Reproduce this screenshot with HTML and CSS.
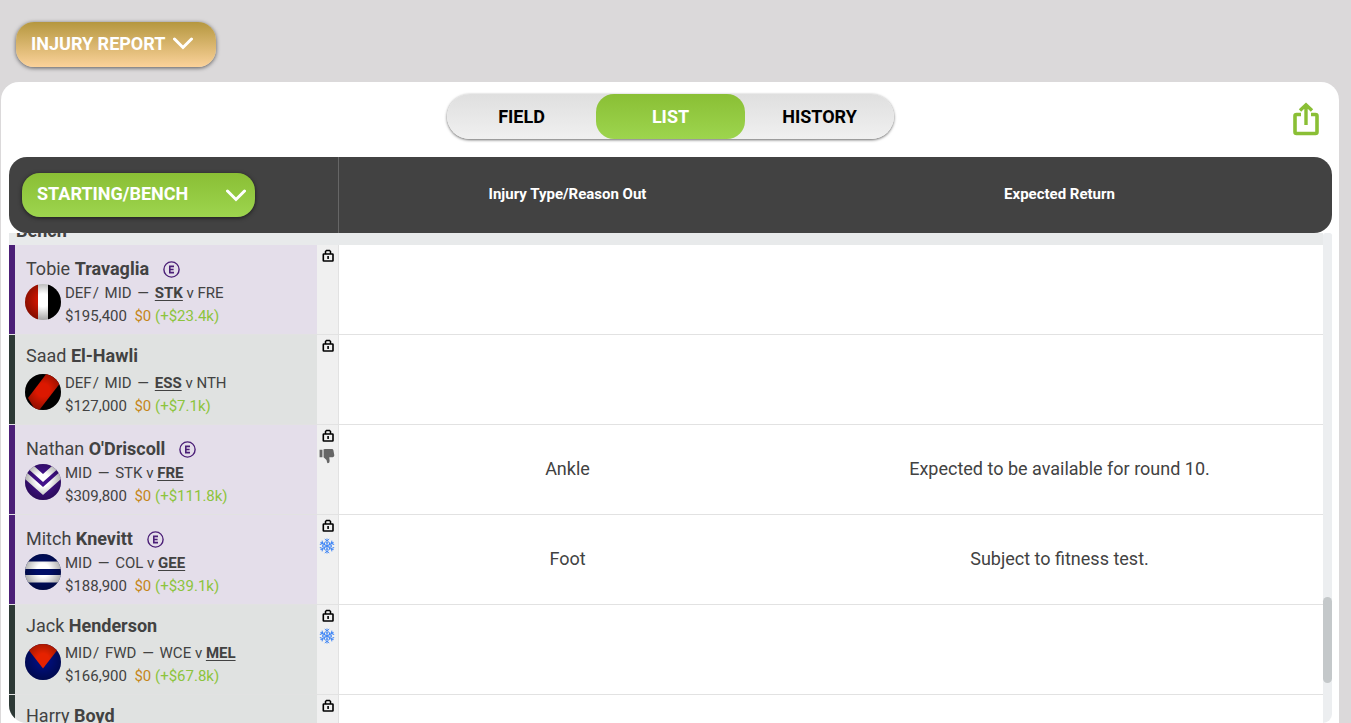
FILE: index.html
```html
<!DOCTYPE html>
<html lang="en">
<head>
<meta charset="utf-8">
<meta name="viewport" content="width=device-width, initial-scale=1">
<title>Injury Report</title>
<link rel="stylesheet" href="styles.css">
</head>
<body>
<svg class="defs" width="0" height="0" aria-hidden="true">
  <defs>
    <radialGradient id="shade" cx="50%" cy="45%" r="60%">
      <stop offset="0.3" stop-color="#000" stop-opacity="0"/>
      <stop offset="1" stop-color="#000" stop-opacity="0.4"/>
    </radialGradient>
    <clipPath id="ball"><circle cx="18" cy="18" r="18"/></clipPath>
    <symbol id="lock" viewBox="0 0 12 13">
      <path d="M3.500 5V2.500L4.500 1.500H7.500L8.500 2.500V5" fill="none" stroke="#000" stroke-width="1.500"/>
      <rect x="1.300" y="5" width="9.700" height="7" rx="0.500" fill="none" stroke="#000" stroke-width="1.600"/>
      <rect x="5.300" y="7" width="1.600" height="3" fill="#000"/>
    </symbol>
    <symbol id="snow" viewBox="0 0 16 16">
      <g fill="none" stroke="#4287f5" stroke-width="1">
        <g id="arm"><path d="M8 8V0.5M5.8 1L8 3L10.2 1M6 3.5L8 5.4L10 3.5"/></g>
        <use href="#arm" transform="rotate(60 8 8)"/>
        <use href="#arm" transform="rotate(120 8 8)"/>
        <use href="#arm" transform="rotate(180 8 8)"/>
        <use href="#arm" transform="rotate(240 8 8)"/>
        <use href="#arm" transform="rotate(300 8 8)"/>
      </g>
    </symbol>
    <symbol id="down" viewBox="0 0 14 14">
      <path d="M0.5 1.5H3V8H0.5ZM4 1.2L5.5 0.8H11.3Q12.5 0.8 12.6 2L13.4 6.4Q13.5 8 12 8H9L9.3 11.3Q9.3 13.3 7.6 13.3Q7.1 13.3 7 12.3Q6.7 9.8 4 8Z" fill="#666"/>
    </symbol>
    <symbol id="emblem" viewBox="0 0 17 17">
      <circle cx="8.5" cy="8.5" r="7.6" fill="none" stroke="#4b1f77" stroke-width="1.4"/>
      <path d="M11 5.4H6.8V11.6H11M6.8 8.5H10.6" fill="none" stroke="#4b1f77" stroke-width="1.6"/>
    </symbol>
    <symbol id="chevron" viewBox="0 0 20 13">
      <path d="M1.500 2L10 10.500L18.500 2" fill="none" stroke="#fff" stroke-width="3" stroke-linecap="round"/>
    </symbol>
  </defs>
</svg>

<header class="toolbar">
  <button class="report-button" type="button" aria-haspopup="true">INJURY REPORT
    <svg class="chevron" aria-hidden="true"><use href="#chevron"/></svg>
  </button>
</header>

<main class="panel">
  <div class="panel-top">
    <nav class="tabs" aria-label="View">
      <button class="tab" type="button">FIELD</button>
      <button class="tab active" type="button" aria-current="true">LIST</button>
      <button class="tab" type="button">HISTORY</button>
    </nav>
    <button class="share" type="button" aria-label="Share">
      <svg viewBox="0 0 26 34" width="26" height="34" aria-hidden="true" fill="none" stroke="#8abf35">
        <path d="M8 12.500H3.500Q2 12.500 2 14V30Q2 31.500 3.500 31.500H22.500Q24 31.500 24 30V14Q24 12.500 22.500 12.500H18" stroke-width="3.600"/>
        <path d="M13 23V4M7 8.500L13 2.800L19 8.500" stroke-width="3.400"/>
      </svg>
    </button>
  </div>

  <div class="list">
    <table class="players">
      <thead>
        <tr>
          <th class="filter-cell" scope="col">
            <div class="filter">
              <select class="filter-select" aria-label="Player group"><option>STARTING/BENCH</option></select>
              <svg class="chevron" aria-hidden="true"><use href="#chevron"/></svg>
            </div>
          </th>
          <th scope="col">Injury Type/Reason Out</th>
          <th scope="col">Expected Return</th>
        </tr>
      </thead>
      <tbody>
        <tr class="group"><th scope="rowgroup">Bench</th></tr>
        <tr>
          <td class="who">
            <div class="player emerging">
              <div class="name"><span>Tobie <b>Travaglia</b></span><svg class="badge" role="img" aria-label="E"><use href="#emblem"/></svg></div>
              <div class="details">
                <svg class="jersey" viewBox="0 0 36 36" aria-hidden="true"><g clip-path="url(#ball)"><path fill="#c81400" d="M0 0H13V36H0Z"/><path fill="#fff" d="M13 0H23V36H13Z"/><path d="M23 0H36V36H23Z"/><path fill="url(#shade)" d="M0 0H36V36H0Z"/></g></svg>
                <div><div>DEF<span class="slash">/</span> MID <span class="dash">—</span> <span class="team">STK</span> v FRE</div><div>$195,400 &nbsp;<span class="gold">$0</span> <span class="gain">(+$23.4k)</span></div></div>
              </div>
            </div>
            <div class="status"><svg class="lock"><use href="#lock"/></svg></div>
          </td>
          <td></td><td></td>
        </tr>
        <tr>
          <td class="who">
            <div class="player">
              <div class="name"><span>Saad <b>El-Hawli</b></span></div>
              <div class="details">
                <svg class="jersey" viewBox="0 0 36 36" aria-hidden="true"><g clip-path="url(#ball)"><path d="M0 0H36V36H0Z"/><path fill="#dc1800" d="M25 -5L3 24L12 39L39 4Z"/><path fill="url(#shade)" d="M0 0H36V36H0Z"/></g></svg>
                <div><div>DEF<span class="slash">/</span> MID <span class="dash">—</span> <span class="team">ESS</span> v NTH</div><div>$127,000 &nbsp;<span class="gold">$0</span> <span class="gain">(+$7.1k)</span></div></div>
              </div>
            </div>
            <div class="status"><svg class="lock"><use href="#lock"/></svg></div>
          </td>
          <td></td><td></td>
        </tr>
        <tr>
          <td class="who">
            <div class="player emerging">
              <div class="name"><span>Nathan <b>O'Driscoll</b></span><svg class="badge" role="img" aria-label="E"><use href="#emblem"/></svg></div>
              <div class="details">
                <svg class="jersey" viewBox="0 0 36 36" aria-hidden="true"><g clip-path="url(#ball)"><path fill="#42118a" d="M0 0H36V36H0Z"/><path fill="#fff" d="M0 -6L18 10L36 -6V2L18 18L0 2ZM0 7L18 23L36 7V15L18 31L0 15Z"/><path fill="url(#shade)" d="M0 0H36V36H0Z"/></g></svg>
                <div><div>MID <span class="dash">—</span> STK v <span class="team">FRE</span></div><div>$309,800 &nbsp;<span class="gold">$0</span> <span class="gain">(+$111.8k)</span></div></div>
              </div>
            </div>
            <div class="status"><svg class="lock"><use href="#lock"/></svg><svg class="mark"><use href="#down"/></svg></div>
          </td>
          <td>Ankle</td><td>Expected to be available for round 10.</td>
        </tr>
        <tr>
          <td class="who">
            <div class="player emerging">
              <div class="name"><span>Mitch <b>Knevitt</b></span><svg class="badge" role="img" aria-label="E"><use href="#emblem"/></svg></div>
              <div class="details">
                <svg class="jersey" viewBox="0 0 36 36" aria-hidden="true"><g clip-path="url(#ball)"><path fill="#000e66" d="M0 0H36V36H0Z"/><path fill="#fff" d="M0 7.500H36V15H0ZM0 21H36V28.500H0Z"/><path fill="url(#shade)" d="M0 0H36V36H0Z"/></g></svg>
                <div><div>MID <span class="dash">—</span> COL v <span class="team">GEE</span></div><div>$188,900 &nbsp;<span class="gold">$0</span> <span class="gain">(+$39.1k)</span></div></div>
              </div>
            </div>
            <div class="status"><svg class="lock"><use href="#lock"/></svg><svg class="mark"><use href="#snow"/></svg></div>
          </td>
          <td>Foot</td><td>Subject to fitness test.</td>
        </tr>
        <tr>
          <td class="who">
            <div class="player">
              <div class="name"><span>Jack <b>Henderson</b></span></div>
              <div class="details">
                <svg class="jersey" viewBox="0 0 36 36" aria-hidden="true"><g clip-path="url(#ball)"><path fill="#000e78" d="M0 0H36V36H0Z"/><path fill="#e62200" d="M-1 0L18 24.500L37 0Z"/><path fill="url(#shade)" d="M0 0H36V36H0Z"/></g></svg>
                <div><div>MID<span class="slash">/</span> FWD <span class="dash">—</span> WCE v <span class="team">MEL</span></div><div>$166,900 &nbsp;<span class="gold">$0</span> <span class="gain">(+$67.8k)</span></div></div>
              </div>
            </div>
            <div class="status"><svg class="lock"><use href="#lock"/></svg><svg class="mark"><use href="#snow"/></svg></div>
          </td>
          <td></td><td></td>
        </tr>
        <tr>
          <td class="who">
            <div class="player">
              <div class="name"><span>Harry <b>Boyd</b></span></div>
            </div>
            <div class="status"><svg class="lock"><use href="#lock"/></svg></div>
          </td>
          <td></td><td></td>
        </tr>
      </tbody>
    </table>
    <div class="scroll-track" aria-hidden="true"><div class="scroll-thumb"></div></div>
  </div>
</main>
</body>
</html>
```
FILE: styles.css
```css
* { box-sizing: border-box; }

body {
  margin: 0;
  height: 100vh;
  overflow: hidden;
  display: flex;
  flex-direction: column;
  background: #dbd9da;
  color: #424242;
  font-family: Roboto, sans-serif;
  font-size: 18px;
}

button, select { font: inherit; border: 0; cursor: pointer; }

.defs { position: absolute; }

.toolbar { padding: 22px 16px 15px; display: flex; }

.chevron { width: 20px; height: 13px; }

.report-button {
  display: flex;
  align-items: center;
  gap: 8px;
  height: 45px;
  padding: 0 23px 2px 15px;
  border-radius: 18px;
  background: linear-gradient(#b5973f, #fbd29a);
  box-shadow: 0 1px 4px rgba(0, 0, 0, 0.6);
  color: #fff;
  font-weight: 700;
}

.panel {
  flex: 1;
  min-height: 0;
  display: flex;
  flex-direction: column;
  margin: 0 12px 0 1px;
  padding: 0 7px 0 8px;
  border-radius: 18px 18px 0 0;
  background: #fff;
}

.panel-top {
  display: grid;
  grid-template-columns: 1fr auto 1fr;
  align-items: center;
  height: 75px;
  padding-right: 13px;
}

.tabs {
  grid-column: 2;
  display: flex;
  margin-left: 13px;
  margin-bottom: 6px;
  border-radius: 23px;
  background: linear-gradient(#dfdfdf, #f0f0f0);
  box-shadow: 0 1px 3px rgba(0, 0, 0, 0.6);
}

.tab {
  width: 149px;
  height: 45px;
  padding: 0;
  border-radius: 18px;
  background: none;
  color: #000;
  font-weight: 700;
}

.tab.active { background: linear-gradient(#8abf35, #9dd54e); color: #fff; }

.share {
  justify-self: end;
  height: 34px;
  margin-bottom: 2px;
  padding: 0;
  background: none;
}

.list { flex: 1; min-height: 0; display: grid; grid-template-rows: 76px 1fr; grid-template-columns: 1fr 9px; }

.players {
  grid-area: 1 / 1 / 3 / 3;
  display: grid;
  grid-template-rows: 76px 1fr;
  min-height: 0;
}

thead {
  display: block;
  padding-right: 9px;
  border-radius: 18px;
  background: #424242;
  color: #fff;
  font-size: 15px;
}

tr { display: grid; grid-template-columns: 330px 1fr 1fr; }

thead tr { height: 76px; }

th, td { padding: 0; }

thead th {
  display: flex;
  align-items: center;
  justify-content: center;
  padding: 0 35px 2px 0;
}

thead .filter-cell {
  justify-content: flex-start;
  padding: 0 0 0 13px;
  border-right: 1px solid #666;
}

.filter { position: relative; display: flex; width: 233px; }

.filter-select {
  appearance: none;
  width: 100%;
  height: 44px;
  padding: 0 50px 3px 15px;
  border-radius: 18px;
  background: linear-gradient(#8abf35, #9dd54e);
  box-shadow: 0 1px 4px rgba(0, 0, 0, 0.6);
  color: #fff;
  font-size: 18px;
  font-weight: 700;
}

.filter .chevron { position: absolute; top: 16px; right: 9px; pointer-events: none; }

tbody {
  display: block;
  min-height: 0;
  margin-right: 9px;
  overflow: hidden;
  border-bottom-left-radius: 18px;
}

tbody tr { height: 90px; border-bottom: 1px solid #e2e2e2; }

tbody .group {
  display: flex;
  align-items: center;
  height: 32px;
  margin-top: -20px;
  padding: 2px 0 0 7px;
  border: 0;
  background: #e8eaeb;
}

td {
  display: flex;
  align-items: center;
  justify-content: center;
  padding: 0 35px 2px 0;
}

.who { align-items: stretch; padding: 0; border-right: 1px solid #e2e2e2; }

.player {
  flex: 1;
  border-left: 6px solid #2d3935;
  background: #e0e2e1;
}

.player.emerging { border-color: #4b1f77; background: #e4deea; }

.name {
  display: flex;
  gap: 14px;
  height: 37px;
  padding: 9px 0 0 11px;
  line-height: 24px;
}

.emerging .name { padding-top: 12px; }

.badge { width: 17px; height: 17px; margin-top: 4px; }

.details {
  display: flex;
  gap: 4px;
  padding-left: 10px;
  font-size: 15px;
  line-height: 23px;
  white-space: nowrap;
}

.jersey { width: 36px; height: 36px; margin-top: 2px; }

.slash { margin: 0 2px 0 1px; }

.dash { margin: 0 2px; }

.team { font-weight: 700; text-decoration: underline; text-underline-offset: 2px; }

.gold { color: #c5861a; }
.gain { color: #8cc43c; }

.status {
  display: flex;
  flex-direction: column;
  align-items: center;
  gap: 6px;
  width: 21px;
  padding: 4px 1px 0 0;
  background: #f0f0f0;
}

.lock { width: 12px; height: 13px; margin-left: 2px; }

.mark { width: 16px; height: 16px; }

.scroll-track {
  grid-area: 2 / 2;
  display: flex;
  flex-direction: column;
  justify-content: flex-end;
  padding-bottom: 40px;
  border-radius: 5px 5px 18px 0;
  background: #eceef0;
}

.scroll-thumb { height: 86px; border-radius: 5px; background: #c4c8ca; }
```
